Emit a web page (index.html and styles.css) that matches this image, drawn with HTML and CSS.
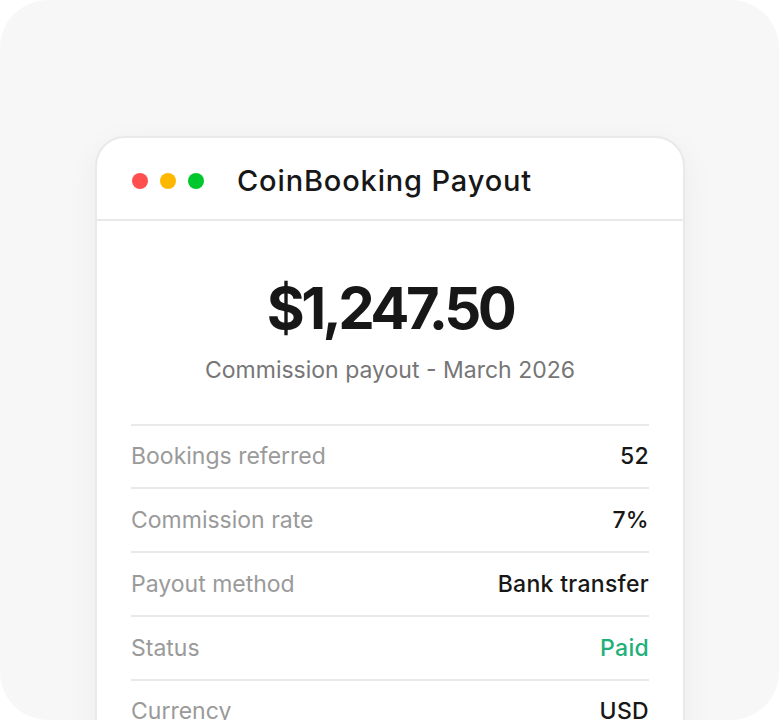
FILE: index.html
```html
<!DOCTYPE html>
<html lang="en">
<head>
  <meta charset="UTF-8">
  <meta name="viewport" content="width=device-width, initial-scale=1">
  <title>CoinBooking Payout</title>
  <link rel="stylesheet" href="styles.css">
</head>
<body>
  <div class="frame">
    <!-- Payout window -->
    <div class="window">
      <div class="titlebar">
        <div class="dots">
          <span class="dot red"></span>
          <span class="dot yellow"></span>
          <span class="dot green"></span>
        </div>
        <h1 class="title">CoinBooking Payout</h1>
      </div>

      <div class="content">
        <div class="amount">$1,247.50</div>
        <div class="subtitle">Commission payout - March 2026</div>

        <div class="rows">
          <div class="row"><span class="label">Bookings referred</span><span class="value">52</span></div>
          <div class="row"><span class="label">Commission rate</span><span class="value">7%</span></div>
          <div class="row"><span class="label">Payout method</span><span class="value">Bank transfer</span></div>
          <div class="row"><span class="label">Status</span><span class="value paid">Paid</span></div>
          <div class="row"><span class="label">Currency</span><span class="value">USD</span></div>
        </div>
      </div>
    </div>
  </div>
</body>
</html>
```

FILE: styles.css
```css
:root {
  --ink: #171717;
  --muted: #9a9a9a;
  --soft: #767676;
  --line: #e9e9e9;
  --paid: #22b07a;
  --font-stack: Inter, "Noto Sans", "Liberation Sans", sans-serif;
}
* {box-sizing: border-box; margin: 0; padding: 0;}
body {
  font-family: var(--font-stack);
  background: #fff;
  color: var(--ink);
  overflow: hidden;
}

/* Outer rounded panel */
.frame {
  height: 720px;
  border-radius: 48px;
  background: #f7f7f7;
  padding-top: 136px;
  display: flex;
  justify-content: center;
  overflow: hidden;
}

/* Window card */
.window {
  width: 590px;
  height: 700px;
  margin-left: 1px;
  background: #fff;
  border: 2px solid var(--line);
  border-radius: 30px;
  box-shadow: 0 8px 32px rgba(0, 0, 0, .05);
}
.titlebar {
  display: flex;
  align-items: center;
  height: 83px;
  padding: 4px 34px 0 35px;
  border-bottom: 2px solid var(--line);
}
.dots {display: flex; gap: 12px;}
.dot {width: 16px; height: 16px; border-radius: 50%;}
.dot.red {background: #ff4f4f;}
.dot.yellow {background: #ffb800;}
.dot.green {background: #00c82c;}
.title {margin-left: 33px; font-size: 29px; font-weight: 500; letter-spacing: .85px;}

/* Body */
.content {padding: 0 34px;}
.amount {
  margin-top: 53px;
  text-align: center;
  font-size: 58px;
  font-weight: 700;
  letter-spacing: -3.6px;
  line-height: 1.2;
}
.subtitle {
  margin-top: 12px;
  text-align: center;
  font-size: 23px;
  color: var(--soft);
}
.rows {margin-top: 40px;}
.row {
  display: flex;
  align-items: center;
  justify-content: space-between;
  height: 63.75px;
  border-top: 2px solid var(--line);
  font-size: 23px;
}
.label {color: var(--muted);}
.value {font-weight: 500; letter-spacing: .3px;}
.value.paid {color: var(--paid);}
```
